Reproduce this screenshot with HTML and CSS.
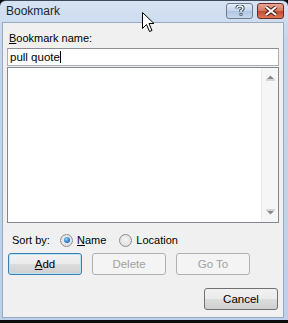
FILE: index.html
```html
<!DOCTYPE html>
<html lang="en">
<head>
    <meta charset="UTF-8">
    <title>Bookmark</title>
    <link rel="stylesheet" href="styles.css">
</head>
<body>
    <div class="window">
        <div class="titlebar">
            <span class="title">Bookmark</span>
            <div class="caption-buttons">
                <div class="cap-btn help-btn">
                    <svg width="12" height="11" viewBox="0 0 12 11">
                        <path d="M3 3.5 Q3 1 6 1 Q9 1 9 3.3 Q9 4.8 7 5.5 L7 7" fill="none" stroke="#2c3e55" stroke-width="3.2"/>
                        <path d="M3 3.5 Q3 1 6 1 Q9 1 9 3.3 Q9 4.8 7 5.5 L7 7" fill="none" stroke="#fff" stroke-width="1.4"/>
                        <rect x="5.6" y="8" width="2.8" height="2.6" fill="#2c3e55"/>
                        <rect x="6.3" y="8.7" width="1.4" height="1.2" fill="#fff"/>
                    </svg>
                </div>
                <div class="cap-btn close-btn">
                    <svg width="14" height="10" viewBox="0 0 14 10">
                        <path d="M2 1 L12 9 M12 1 L2 9" stroke="#4a1d14" stroke-width="4"/>
                        <path d="M2 1 L12 9 M12 1 L2 9" stroke="#fff" stroke-width="2"/>
                    </svg>
                </div>
            </div>
        </div>

        <div class="client">
            <div class="field-label"><u>B</u>ookmark name:</div>
            <div class="name-input">pull quote<span class="caret"></span></div>

            <div class="listbox">
                <div class="list-area"></div>
                <div class="scrollbar">
                    <svg class="arrow" width="9" height="6" viewBox="0 0 9 6">
                        <path d="M4.5 0.5 L8 4 L1 4 Z" fill="#8a8a8a"/>
                        <rect x="0" y="4.5" width="9" height="1" fill="#b5b5b5"/>
                    </svg>
                    <svg class="arrow" width="9" height="6" viewBox="0 0 9 6">
                        <rect x="0" y="0.5" width="9" height="1" fill="#b5b5b5"/>
                        <path d="M1 2 L8 2 L4.5 5.5 Z" fill="#8a8a8a"/>
                    </svg>
                </div>
            </div>

            <div class="sort-row">
                <span class="sort-label">Sort by:</span>
                <span class="radio checked"></span>
                <span class="radio-text"><u>N</u>ame</span>
                <span class="radio"></span>
                <span class="radio-text">Location</span>
            </div>

            <div class="button-row">
                <div class="btn default"><u>A</u>dd</div>
                <div class="btn disabled">Delete</div>
                <div class="btn disabled">Go To</div>
            </div>

            <div class="footer-row">
                <div class="btn">Cancel</div>
            </div>
        </div>

        <svg class="pointer" width="13" height="21" viewBox="0 0 13 21">
            <path d="M0.5 0.5 L0.5 16.5 L4.5 12.5 L7.5 19.5 L10 18.5 L7 11.5 L12 11.5 Z" fill="#fff" stroke="#000" stroke-width="1"/>
        </svg>
    </div>
</body>
</html>
```

FILE: styles.css
```css
* {
    box-sizing: border-box;
}
body {
    margin: 0;
    background: #0c0c0c;
    font-family: "Liberation Sans", Arial, sans-serif;
    font-size: 11px;
    color: #000;
}
.window {
    position: relative;
    width: 288px;
    height: 320px;
    display: flex;
    flex-direction: column;
    background: linear-gradient(#d6e3f2, #c4d6ec 40px, #bcd0e9);
    border-top: 1px solid #3c4a5c;
    border-radius: 6px 6px 0 0;
    padding: 0 4px 2px 2px;
}
.titlebar {
    height: 21px;
    display: flex;
    align-items: center;
    justify-content: space-between;
    flex-shrink: 0;
}
.title {
    font-size: 12px;
    color: #1c2530;
    padding-left: 4px;
    margin-top: -1px;
}
.caption-buttons {
    display: flex;
    gap: 4px;
    margin-top: -2px;
}
.cap-btn {
    width: 27px;
    height: 16px;
    border: 1px solid #6d7c8f;
    border-radius: 3px;
    display: flex;
    align-items: center;
    justify-content: center;
}
.help-btn {
    background: linear-gradient(#e3ecf7, #c3d4ea 50%, #aec5e2 51%, #c7d9ef);
}
.close-btn {
    border-color: #6e2a20;
    background: linear-gradient(#e8a795, #d47860 50%, #c2492f 51%, #d9795c);
}
.client {
    flex: 1;
    background: #f0f0f0;
    border: 1px solid #98aac0;
    padding: 7px 4px 0 4px;
    display: flex;
    flex-direction: column;
}
.field-label {
    height: 14px;
    line-height: 14px;
    padding-left: 2px;
    margin-top: 1px;
}
.name-input {
    margin-top: 3px;
    height: 18px;
    background: #fff;
    border: 1px solid #abadb3;
    border-top-color: #8b8e94;
    padding-left: 2px;
    line-height: 16px;
    font-size: 11.5px;
}
.caret {
    display: inline-block;
    width: 1px;
    height: 12px;
    background: #000;
    vertical-align: -2px;
}
.listbox {
    margin-top: 1px;
    height: 156px;
    background: #fff;
    border: 1px solid #828790;
    display: flex;
}
.list-area {
    flex: 1;
}
.scrollbar {
    width: 17px;
    background: #f6f6f6;
    border-left: 1px solid #ececec;
    display: flex;
    flex-direction: column;
    justify-content: space-between;
    align-items: center;
    padding: 7px 0 7px 0;
}
.sort-row {
    margin-top: 8px;
    height: 18px;
    display: flex;
    align-items: center;
    padding-left: 5px;
}
.sort-label {
    width: 44px;
}
.radio {
    width: 13px;
    height: 13px;
    border-radius: 50%;
    border: 1px solid #8f8f8f;
    background: radial-gradient(circle at 50% 40%, #f4f4f4, #d8d8d8);
    margin-left: 4px;
    margin-right: 4px;
    position: relative;
}
.radio.checked::after {
    content: "";
    position: absolute;
    left: 2.5px;
    top: 2.5px;
    width: 6px;
    height: 6px;
    border-radius: 50%;
    background: radial-gradient(circle at 40% 35%, #8fd3ff, #1a6bc2 70%, #0e4f9a);
}
.radio-text {
    margin-right: 9px;
}
.button-row {
    margin-top: 4px;
    display: flex;
    gap: 10px;
    padding-left: 1px;
}
.btn {
    width: 74px;
    height: 22px;
    border: 1px solid #707070;
    border-radius: 3px;
    background: linear-gradient(#f2f2f2, #ebebeb 50%, #dddddd 51%, #cfcfcf);
    display: flex;
    align-items: center;
    justify-content: center;
    font-size: 11.5px;
}
.btn.default {
    border-color: #3c7fb1;
    box-shadow: inset 0 0 0 1px #b5e4fa;
}
.btn.disabled {
    border-color: #adb2b5;
    background: #f4f4f4;
    color: #a0a0a0;
}
.footer-row {
    margin-top: 13px;
    display: flex;
    justify-content: flex-end;
    padding-right: 1px;
}
.pointer {
    position: absolute;
    left: 142px;
    top: 11px;
}
```
